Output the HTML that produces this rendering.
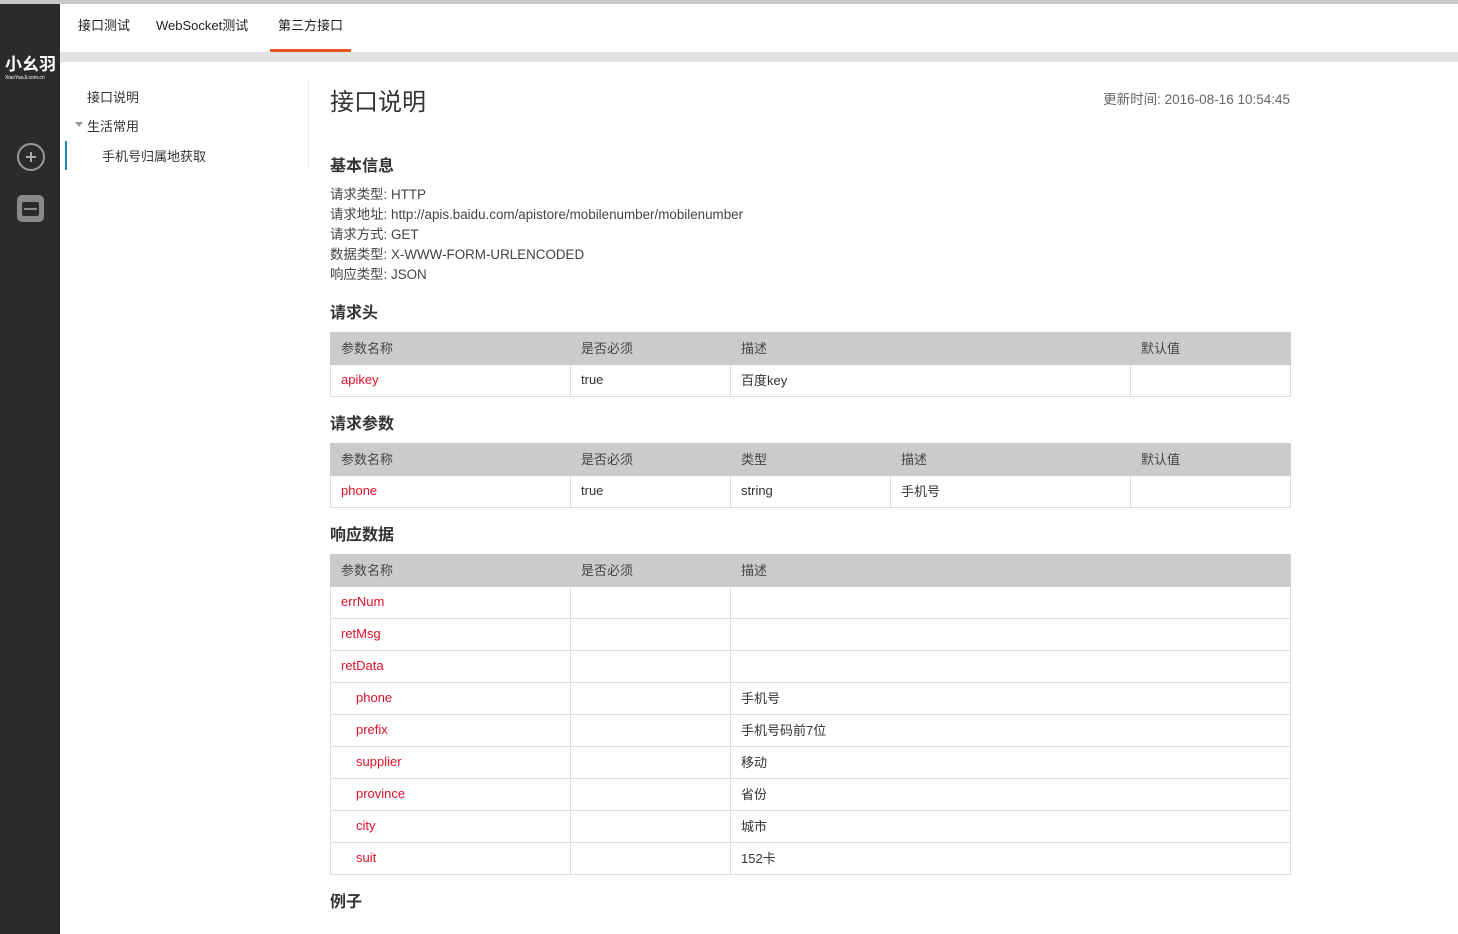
<!DOCTYPE html>
<html><head><meta charset="utf-8"><style>
*{margin:0;padding:0;box-sizing:border-box}
body{width:1458px;height:934px;overflow:hidden;background:#fff;font-family:"Liberation Sans","Noto Sans CJK SC",sans-serif;color:#333;position:relative}
.abs{position:absolute}
.topline{left:0;top:0;width:1458px;height:4px;background:#c8c8c8}
.side{left:0;top:4px;width:60px;height:930px;background:#2b2b2b}
.graybar{left:60px;top:52px;width:1398px;height:10px;background:#e2e2e2}
.tab{top:15px;font-size:13px;color:#222}
.menu{font-size:13px;color:#333}
h3{position:absolute;left:330px;font-size:16px;font-weight:bold;color:#333}
.info{left:330px;font-size:13px;color:#444;line-height:20px}
table{position:absolute;left:330px;width:959px;border-collapse:collapse;font-size:13px;table-layout:fixed}
th{background:#cbcbcb;font-weight:normal;text-align:left;height:32px;padding-left:10px;color:#444;border:1px solid #cbcbcb;padding-bottom:3px}
td{height:32px;padding-left:10px;border:1px solid #ddd;color:#333;padding-bottom:2px}
td.r{color:#e0102a}
td.i{padding-left:25px}
</style></head><body>
<div class="abs topline"></div>
<div class="abs side">
 <div class="abs" style="left:5px;top:46px;color:#fff;font-size:17px;font-weight:bold;letter-spacing:0">小幺羽</div>
 <div class="abs" style="left:5px;top:71px;color:#fff;font-size:5px;">XiaoYaoJi.com.cn</div>
 <svg class="abs" style="left:15px;top:137px" width="32" height="32"><circle cx="16" cy="16" r="13" fill="none" stroke="#999" stroke-width="2"/><path d="M16 11v10M11 16h10" stroke="#aaa" stroke-width="2"/></svg>
 <svg class="abs" style="left:16px;top:190px" width="30" height="30"><rect x="1" y="1" width="27" height="27" rx="5" fill="#888"/><rect x="6" y="8" width="17" height="14" rx="2" fill="#2b2b2b"/><rect x="8" y="14" width="13" height="2" fill="#888"/></svg>
</div>
<div class="abs tab" style="left:78px">接口测试</div>
<div class="abs tab" style="left:156px">WebSocket测试</div>
<div class="abs tab" style="left:278px">第三方接口</div>
<div class="abs" style="left:270px;top:49px;width:81px;height:3px;background:#e8541e"></div>
<div class="abs graybar"></div>
<div class="abs menu" style="left:87px;top:87px">接口说明</div>
<div class="abs" style="left:75px;top:122px;width:0;height:0;border-left:4px solid transparent;border-right:4px solid transparent;border-top:5px solid #999"></div>
<div class="abs menu" style="left:87px;top:116px">生活常用</div>
<div class="abs" style="left:65px;top:141px;width:2px;height:29px;background:#1a8ac0"></div>
<div class="abs menu" style="left:102px;top:146px">手机号归属地获取</div>
<div class="abs" style="left:308px;top:80px;width:1px;height:90px;background:#f0f0f0"></div>
<div class="abs" style="left:330px;top:82px;font-size:24px;color:#333">接口说明</div>
<div class="abs" style="right:168px;top:88px;font-size:13.5px;color:#666">更新时间: 2016-08-16 10:54:45</div>
<h3 style="top:152px">基本信息</h3>
<div class="abs info" style="top:185px;font-size:13.4px">请求类型: HTTP<br>请求地址: http://apis.baidu.com/apistore/mobilenumber/mobilenumber<br>请求方式: GET<br>数据类型: X-WWW-FORM-URLENCODED<br>响应类型: JSON</div>
<h3 style="top:299px">请求头</h3>
<table style="top:332px"><colgroup><col style="width:240px"><col style="width:160px"><col style="width:400px"><col style="width:160px"></colgroup>
<tr><th>参数名称</th><th>是否必须</th><th>描述</th><th>默认值</th></tr>
<tr><td class="r">apikey</td><td>true</td><td>百度key</td><td></td></tr></table>
<h3 style="top:410px">请求参数</h3>
<table style="top:443px"><colgroup><col style="width:240px"><col style="width:160px"><col style="width:160px"><col style="width:240px"><col style="width:160px"></colgroup>
<tr><th>参数名称</th><th>是否必须</th><th>类型</th><th>描述</th><th>默认值</th></tr>
<tr><td class="r">phone</td><td>true</td><td>string</td><td>手机号</td><td></td></tr></table>
<h3 style="top:521px">响应数据</h3>
<table style="top:554px"><colgroup><col style="width:240px"><col style="width:160px"><col style="width:560px"></colgroup>
<tr><th>参数名称</th><th>是否必须</th><th>描述</th></tr>
<tr><td class="r">errNum</td><td></td><td></td></tr>
<tr><td class="r">retMsg</td><td></td><td></td></tr>
<tr><td class="r">retData</td><td></td><td></td></tr>
<tr><td class="r i">phone</td><td></td><td>手机号</td></tr>
<tr><td class="r i">prefix</td><td></td><td>手机号码前7位</td></tr>
<tr><td class="r i">supplier</td><td></td><td>移动</td></tr>
<tr><td class="r i">province</td><td></td><td>省份</td></tr>
<tr><td class="r i">city</td><td></td><td>城市</td></tr>
<tr><td class="r i">suit</td><td></td><td>152卡</td></tr></table>
<h3 style="top:888px">例子</h3>
</body></html>
